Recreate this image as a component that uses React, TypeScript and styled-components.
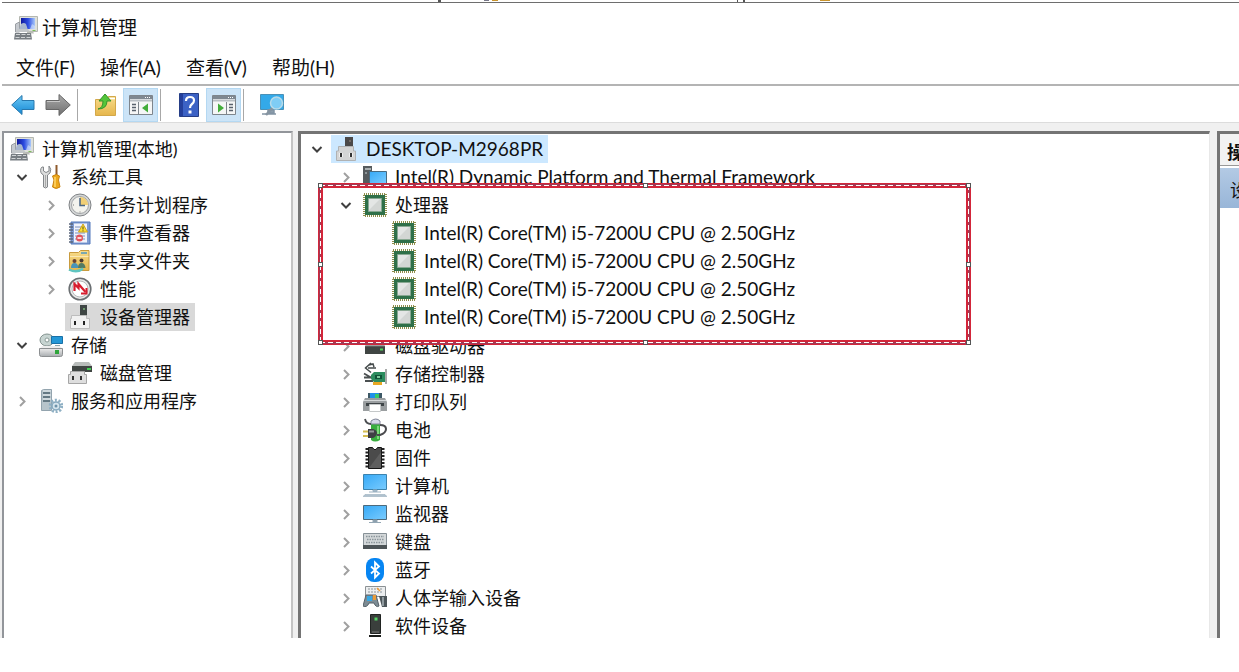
import React from "react";
import styled, { createGlobalStyle, css } from "styled-components";

const GlobalStyle = createGlobalStyle`
  * { box-sizing: border-box; }
  body {
    margin: 0;
    background: #fff;
    color: #111;
    font-family: Lato, "Noto Sans CJK SC", sans-serif;
    font-size: 18px;
    line-height: 28px;
    overflow: hidden;
  }
  button { font: inherit; color: inherit; }
`;

/* ---------- layout ---------- */

const Window = styled.div`
  display: flex;
  flex-direction: column;
  height: calc(100vh - 34px);
  padding-left: 2px;
`;

const Backdrop = styled.div`
  height: 3px;
  border-bottom: 1px solid #6e6e6e;
  padding-left: 436px;
  line-height: 0;
`;

const TitleBar = styled.header`
  display: flex;
  align-items: center;
  gap: 4px;
  height: 49px;
  padding-left: 12px;
`;

const Title = styled.h1`
  margin: 0;
  font-size: 19px;
  font-weight: 400;
`;

const MenuBar = styled.nav`
  display: flex;
  align-items: center;
  gap: 25px;
  height: 34px;
  padding-left: 14px;
  border-bottom: 2px solid #b4b4b4;
  font-size: 19px;
`;

const MenuItem = styled.button`
  border: 0;
  padding: 0;
  background: none;
  white-space: nowrap;
`;

const Toolbar = styled.div`
  display: flex;
  align-items: center;
  height: 36px;
  padding: 2px 0 0 3px;
`;

const ToolButton = styled.button<{ $active?: boolean }>`
  display: flex;
  align-items: center;
  justify-content: center;
  width: 35px;
  height: 34px;
  padding: 0;
  border: 0;
  background: none;
  ${(p) =>
    p.$active &&
    css`
      background: #cce4f7;
      border: 1px solid #b4d8f2;
    `}
`;

const Separator = styled.span`
  width: 1px;
  height: 32px;
  margin: 0 10px 0 2px;
  background: #a8a8a8;
`;

const Workspace = styled.main`
  display: flex;
  flex: 1;
  min-height: 0;
  margin-left: -2px;
  padding: 9px 0 0 2px;
  background: linear-gradient(#dcdcdc, #dcdcdc) 0 0 / 100% 1px no-repeat, #f0f0f0;
`;

const Pane = styled.section`
  min-width: 0;
  overflow: hidden;
  background: #fff;
`;

const ScopePane = styled(Pane)`
  flex: 0 0 291px;
  padding: 2px 0 0 3px;
  border: solid #92959a;
  border-width: 2px 2px 0 2px;
  border-right-color: #c4c4c4;
`;

const DevicePane = styled(Pane)`
  flex: 1;
  margin-left: 5px;
  padding: 1px 0 0 1px;
  border: solid #747474;
  border-width: 3px 1px 0 3px;
  border-right-color: #e8e8e8;
`;

const ActionPane = styled(Pane)`
  flex: 0 0 22px;
  margin-left: 7px;
  border: solid #747474;
  border-width: 3px 0 0 3px;
`;

const ActionHeading = styled.h2`
  margin: 0;
  height: 32px;
  padding: 4px 0 0 7px;
  border-bottom: 1px solid #999;
  background: #f2f2f2;
  font-size: 18px;
  line-height: 28px;
  font-weight: 700;
  white-space: nowrap;
`;

const ActionGroup = styled.div`
  height: 40px;
  margin-top: 2px;
  padding-left: 10px;
  background: linear-gradient(#b3cae4, #98b6d8);
  line-height: 44px;
  white-space: nowrap;
`;

/* ---------- tree ---------- */

const TreeList = styled.ul`
  margin: 0;
  padding: 0;
  list-style: none;
`;

const Row = styled.li<{ $level: number }>`
  display: flex;
  height: 28px;
  padding-left: ${(p) => p.$level * 29}px;
`;

const Toggle = styled.button`
  display: flex;
  align-items: center;
  justify-content: center;
  flex: 0 0 29px;
  padding: 0;
  border: 0;
  background: none;
`;

const NodeButton = styled.button<{ $fill?: string; $latin?: boolean }>`
  display: flex;
  align-items: center;
  gap: 8px;
  height: 28px;
  padding: 0 5px 0 3px;
  border: 0;
  background: ${(p) => p.$fill ?? "none"};
  font-size: ${(p) => (p.$latin ? 19 : 18)}px;
  white-space: nowrap;
`;

const Marked = styled.div`
  position: relative;
  z-index: 1;
  padding-bottom: 1px;
`;

const Selection = styled.div`
  position: absolute;
  z-index: -1;
  top: -8px;
  bottom: -13px;
  left: 16px;
  width: 653px;
  background: #fff;
  border: 5px solid #d3263a;

  &::before {
    content: "";
    position: absolute;
    inset: -4px;
    border: 2px solid #a23a55;
  }
  &::after {
    content: "";
    position: absolute;
    inset: -3px;
    background:
      repeating-linear-gradient(90deg, #fff 0 5px, transparent 5px 8px) 0 0 / 100% 1px no-repeat,
      repeating-linear-gradient(90deg, #fff 0 5px, transparent 5px 8px) 0 100% / 100% 1px no-repeat,
      repeating-linear-gradient(#fff 0 5px, transparent 5px 8px) 0 0 / 1px 100% no-repeat,
      repeating-linear-gradient(#fff 0 5px, transparent 5px 8px) 100% 0 / 1px 100% no-repeat;
  }
`;

const Handle = styled.i<{ $x: number; $y: number }>`
  position: absolute;
  z-index: 1;
  left: ${(p) => p.$x}%;
  top: ${(p) => p.$y}%;
  width: 5px;
  height: 5px;
  margin: ${(p) => (p.$y === 0 ? -5 : p.$y === 100 ? 0 : -2)}px 0 0
    ${(p) => (p.$x === 0 ? -5 : p.$x === 100 ? 0 : -2)}px;
  border: 1px solid #555;
  background: #fff;
`;

/* ---------- icons ---------- */

const Svg = styled.svg`
  display: block;
  flex: none;
`;

const Icon = ({ children, w = 24, h = 24 }: { children: React.ReactNode; w?: number; h?: number }) => (
  <Svg width={w} height={h} viewBox={`0 0 ${w} ${h}`} aria-hidden="true">
    {children}
  </Svg>
);

const Gradients = () => (
  <Svg width="0" height="0" aria-hidden="true">
    <defs>
      <linearGradient id="sky" x1="0" y1="0" x2="1" y2="1">
        <stop offset="0" stopColor="#36a9f6" />
        <stop offset="1" stopColor="#7accff" />
      </linearGradient>
      <linearGradient id="steel" x1="0" y1="0" x2="0" y2="1">
        <stop offset="0" stopColor="#ececec" />
        <stop offset="1" stopColor="#a9adb0" />
      </linearGradient>
      <linearGradient id="navy" x1="0" y1="0" x2="1" y2="0">
        <stop offset="0" stopColor="#10189c" />
        <stop offset="0.5" stopColor="#2b4be0" />
        <stop offset="1" stopColor="#a9c8fa" />
      </linearGradient>
      <linearGradient id="arrowBlue" x1="0" y1="0" x2="0" y2="1">
        <stop offset="0" stopColor="#6cc8f5" />
        <stop offset="1" stopColor="#1488d4" />
      </linearGradient>
      <linearGradient id="arrowGray" x1="0" y1="0" x2="0" y2="1">
        <stop offset="0" stopColor="#aaa" />
        <stop offset="1" stopColor="#6f6f6f" />
      </linearGradient>
      <linearGradient id="folder" x1="0" y1="0" x2="0" y2="1">
        <stop offset="0" stopColor="#f7dc8b" />
        <stop offset="1" stopColor="#e6b64c" />
      </linearGradient>
    </defs>
  </Svg>
);

const ManagementIcon = () => (
  <Icon>
    <path d="M5.500.5h18v15h-18z" fill="#dfe1dc" stroke="#b4b7b0" />
    <path d="M7 2h14v11H7z" fill="url(#navy)" />
    <path d="M16 13l2-5 3 2v3z" fill="#dbe7fb" opacity=".6" />
    <path d="M1.500 8l4-2v10h-4z" fill="#c6cacf" stroke="#9a9ea3" />
    <path d="M7 8q3-2 5 0l2 6H5z" fill="#a7b6cf" />
    <path d="M3 13h11l2 3H2z" fill="#c3c7ca" />
    <path d="M13 15.500h6l1 2h-7z" fill="#b9bbb5" />
    <path d="M1 17h16l1 6.500H0z" fill="#777d82" />
    <path d="M2 18.500h14M1.500 21.500h15" stroke="#d0d3d5" strokeDasharray="4 1.500" />
    <path d="M18.500 14.500h3" stroke="#7bbd5a" />
  </Icon>
);

const ToolsIcon = () => (
  <Icon>
    <path d="M3 2a5 5 0 0 0 0 7l1.500 1V22q2 2 4 0V10L11 8q2-4-1-7v5L7 7.500 4.500 6V2z" fill="#dcdddd" stroke="#84878a" />
    <path d="M6.500 10v12" stroke="#aaa" />
    <path d="M16.500 0h2v10h-2z" fill="#8f5a2c" />
    <path d="M13.500 11q4-3 7 0l-1 4 1.500 7q-4 3-7.500 0l1.500-7z" fill="#eda81c" stroke="#c98312" />
    <path d="M16 12v10" stroke="#ffd76b" strokeWidth="1.500" />
  </Icon>
);

const ClockIcon = () => (
  <Icon>
    <circle cx="12" cy="12" r="11" fill="#d4d6d6" stroke="#808386" />
    <circle cx="12" cy="12" r="8.500" fill="#f3f3ee" stroke="#a2a5a8" />
    <path d="M12 12V4a8 8 0 0 1 8 8z" fill="#f1cf75" />
    <path d="M12 5v7.500h5" fill="none" stroke="#4a6684" strokeWidth="1.500" />
    <path d="M12 18.500v1M5 12h1" stroke="#777" />
  </Icon>
);

const EventIcon = () => (
  <Icon>
    <path d="M3 1h19v22H3z" fill="#7f9cd3" stroke="#5378bb" />
    <path d="M6 2.500h13v19H6z" fill="#f0f3fb" />
    <path d="M7 6h10M7 9h10M7 12h10M7 15h10M7 18h10" stroke="#7890c2" />
    <path d="M1 3h4M1 6h4M1 9h4M1 12h4M1 15h4M1 18h4M1 21h4" stroke="#5a657b" strokeWidth="1.300" />
    <path d="M15 3l4.500 8h-9z" fill="#f9df36" stroke="#d0a51d" />
    <path d="M15 5.500v3M15 9.300v1" stroke="#554a16" />
    <circle cx="11.500" cy="17" r="3.500" fill="#e2545c" />
    <path d="M9.500 17h4" stroke="#fff" strokeWidth="1.500" />
  </Icon>
);

const ShareIcon = () => (
  <Icon>
    <path d="M1.500 3.500h9l2-2h8.500v20H1.500z" fill="url(#folder)" stroke="#c99b3e" />
    <path d="M13 4h6" stroke="#5299c0" strokeWidth="1.500" />
    <path d="M2 7.500h18.500" stroke="#fbe9b4" />
    <circle cx="6.500" cy="12" r="2" fill="#6b4334" />
    <circle cx="13.500" cy="11.500" r="2" fill="#4c3a30" />
    <path d="M3 19q0-5 3.500-5t4 5z" fill="#4a94b8" />
    <path d="M10 19q0-5 3.500-5t4 5z" fill="#557b62" />
    <path d="M1 20.500q8 4 14-1" fill="none" stroke="#5fc5c0" strokeWidth="2.500" />
  </Icon>
);

const PerformanceIcon = () => (
  <Icon>
    <circle cx="12" cy="12" r="10.800" fill="#e8e9e8" stroke="#6b6f72" strokeWidth="1.600" />
    <circle cx="12" cy="12" r="8" fill="#fff" stroke="#b6babc" />
    <path d="M6.500 14V7l4 4V7l7 8" fill="none" stroke="#d81d2e" strokeWidth="2.200" />
    <path d="M13 16.500h5.500V11" fill="none" stroke="#d81d2e" strokeWidth="2" />
  </Icon>
);

const DeviceManagerIcon = () => (
  <Icon>
    <path d="M12 0h7v11h-7z" fill="#3f4644" />
    <path d="M15 3h2v2h-2z" fill="#6f9b6e" />
    <path d="M3.500 10.500h15v3h3v10h-19v-10h1z" fill="#f1f1f1" stroke="#bdbdbd" />
    <path d="M6 16h2v4H6zM15 16h2v4h-2z" fill="#222" />
  </Icon>
);

const ComputerNodeIcon = () => (
  <Icon>
    <path d="M11 0h8v10h-8z" fill="#4b4949" />
    <path d="M15 3h2v2h-2z" fill="#746c66" />
    <path d="M4.500 9.500h15V14h2v9.500h-19V14h2z" fill="#d4d5d5" stroke="#b0b2b3" />
    <path d="M5 16h4v4H5zM15 16h4v4h-4z" fill="#efefef" />
    <path d="M6 16h2v4H6zM16 16h2v4h-2z" fill="#333" />
  </Icon>
);

const StorageIcon = () => (
  <Icon>
    <ellipse cx="8" cy="7" rx="7" ry="6" fill="#c7d4d1" stroke="#82918e" />
    <circle cx="8" cy="7" r="2" fill="#fff" stroke="#8a9c98" />
    <path d="M12.500 3.500h11v7h-11z" fill="#2497d6" stroke="#1970a7" />
    <path d="M16 12h5v2h-5z" fill="#8ba6ad" />
    <path d="M3 13h18l2.500 3H.5z" fill="#ededed" />
    <path d="M.5 15.500h23v6q0 2-2 2h-19q-2 0-2-2z" fill="url(#steel)" stroke="#8c8f91" />
    <path d="M16 17h4v4h-4z" fill="#30a53b" />
  </Icon>
);

const DiskManagementIcon = () => (
  <Icon>
    <path d="M7 1h14l3 4H4z" fill="#b9bdbb" />
    <path d="M4 5h20v6H4z" fill="#404643" />
    <path d="M19 7h4v2h-4z" fill="#41cd52" />
    <path d="M2.500 10.500h14v3h2v9h-18v-9h2z" fill="#dedede" stroke="#a6a6a6" />
    <path d="M4 15h2v4H4zM12 15h2v4h-2z" fill="#333" />
  </Icon>
);

const ServicesIcon = () => (
  <Icon>
    <path d="M2.500 1.500l2-1h8v21h-10z" fill="#b6c4cb" stroke="#93a4ae" />
    <path d="M4 4h7M4 8h7M4 12h7" stroke="#49606d" strokeWidth="1.500" />
    <path d="M4 2h8M4 6h8M4 10h8" stroke="#e6edf0" />
    <circle cx="17" cy="17" r="5.800" fill="none" stroke="#8fb0c4" strokeWidth="3" strokeDasharray="2 1.640" />
    <circle cx="17" cy="17" r="4" fill="#d6e5ed" stroke="#86a9be" strokeWidth="1.500" />
    <circle cx="17" cy="17" r="1.500" fill="#6d93aa" />
  </Icon>
);

const PlatformIcon = () => (
  <Icon>
    <path d="M0 1h9v17H0z" fill="#565b5e" />
    <path d="M2 4h6" stroke="#c6cbce" strokeWidth="1.500" />
    <path d="M2 8h2" stroke="#8d9599" strokeWidth="2" />
    <path d="M6.500 6.500h17v12h-17z" fill="url(#sky)" stroke="#496b80" />
    <path d="M12 20h8M9 22h13" stroke="#7d8b94" />
  </Icon>
);

const CpuIcon = () => (
  <Icon>
    <rect x="1" y="1" width="22" height="22" fill="none" stroke="#8f8f4c" strokeWidth="2" strokeDasharray="1 1" />
    <path d="M2 2h20v20H2z" fill="#2f7049" />
    <path d="M5.500 5.500h13v13h-13z" fill="#d3d6d4" stroke="#88a892" />
    <path d="M6 6h11L6 17z" fill="#e4e6e5" />
  </Icon>
);

const DiskIcon = () => (
  <Icon>
    <path d="M5 8h14l3 5H2z" fill="#c8caca" />
    <path d="M2 12h20v8H2z" fill="#404543" />
    <path d="M2 12h20" stroke="#777" />
    <path d="M17 15.500h3" stroke="#50d45d" strokeWidth="2" />
  </Icon>
);

const StorageControllerIcon = () => (
  <Icon>
    <path d="M8 1L2.500 6 8 10.500M6 3l4-1 1 3M5 6h8" fill="none" stroke="#454b4c" strokeWidth="1.500" />
    <path d="M1 11.500l7 4M1 15.500h7M2 19h8" stroke="#4b5051" strokeWidth="1.800" />
    <path d="M8 13l3-3h12v10H11l-3-3z" fill="#2b8c5e" />
    <path d="M12 13h7v4h-7z" fill="#105338" />
    <path d="M14 14h3v2h-3z" fill="#7cc99c" />
    <path d="M23 7v15" stroke="#a8aaa9" strokeWidth="2" />
    <path d="M10 20h9v3h-9z" fill="#e8a724" />
  </Icon>
);

const PrinterIcon = () => (
  <Icon>
    <path d="M5 3h14v7H5z" fill="#3c5866" />
    <path d="M7 3h9v5H7z" fill="#1f8fea" />
    <path d="M12 4h4v4h-4z" fill="#37c968" />
    <path d="M2 8h20l2 4v9H0v-9z" fill="#9a9ea0" />
    <path d="M1 10.500h22" stroke="#d5d8d9" />
    <path d="M3 13h18v3H3z" fill="#3e4447" />
    <path d="M6.500 14.500h11v7h-11z" fill="#fff" stroke="#c5c8c9" />
  </Icon>
);

const BatteryIcon = () => (
  <Icon>
    <path d="M8 3q5-4 9 0v19q-5 3-9 0z" fill="#39ad3f" />
    <path d="M8 3q5-4 9 0v3H8z" fill="#d6d8ea" stroke="#85869d" />
    <path d="M15 8v13" stroke="#7ed97c" strokeWidth="2" />
    <path d="M2 1q1 5 6 5" fill="none" stroke="#4b4e51" strokeWidth="1.800" />
    <path d="M17 7q6 0 6 4t-6 6h-3" fill="none" stroke="#4a4b4e" strokeWidth="2" />
    <path d="M5 11h5q4 1 4 4t-4 5H5z" fill="#3f4044" />
    <path d="M6 13.500h5" stroke="#96989a" strokeWidth="2" />
    <path d="M0 13.500h5M0 18h5" stroke="#d3bc52" strokeWidth="2" />
  </Icon>
);

const FirmwareIcon = () => (
  <Icon>
    <path d="M4 2v21M20 2v21" stroke="#222" strokeWidth="3" strokeDasharray="2 1.500" />
    <path d="M5.500 1.500h4l1.500 2h2l1.500-2h4v21h-13z" fill="#4b4b4b" stroke="#161616" />
    <path d="M6 22L18 6v16z" fill="#5e5e5e" />
  </Icon>
);

const ComputerIcon = () => (
  <Icon>
    <path d="M.5.5h23v15H.5z" fill="url(#sky)" stroke="#3c83ae" />
    <path d="M10 16h4v1.500h-4zM6 18h12" fill="#abc0ce" stroke="#9cb2c2" />
    <path d="M2 20.500h20l2 2H0z" fill="#afc1ce" stroke="#8fa6b7" strokeWidth=".5" />
  </Icon>
);

const MonitorIcon = () => (
  <Icon>
    <path d="M.5 3.500h23v14H.5z" fill="url(#sky)" stroke="#4d6a7c" />
    <path d="M10 18h4v2h-4zM6 20.500h12" fill="#8699a7" stroke="#94a7b4" />
  </Icon>
);

const KeyboardIcon = () => (
  <Icon>
    <path d="M.5 3.500h23v12H.5z" fill="#d4d8da" stroke="#879197" />
    <path d="M3 6.500h18M4 9.500h17M3 12.500h18" stroke="#8b959a" strokeWidth="1.300" strokeDasharray="1.500 1" />
    <path d="M0 15h24v4H0z" fill="#4d5457" />
  </Icon>
);

const BluetoothIcon = () => (
  <Icon>
    <rect x="3" y="0" width="18" height="24" rx="8" fill="#0785f2" />
    <path d="M8 8.500l8 7-4 4V4.500l4 4-8 7" fill="none" stroke="#fff" strokeWidth="1.800" />
  </Icon>
);

const HidIcon = () => (
  <Icon>
    <path d="M2.500.5h20v10h-20z" fill="#eceeef" stroke="#8b9194" />
    <path d="M5 3h15M5 6h15" stroke="#8c9499" strokeDasharray="2 1" />
    <path d="M14 2l3 3" stroke="#ee9b36" strokeWidth="1.500" />
    <path d="M3 9h10l3 11q-3 2-5-3H6q-2 5-6 3z" fill="#7d8c94" stroke="#566168" />
    <path d="M4 10h5v5H4z" fill="#39a8e3" />
    <path d="M10 9h3v5h-3z" fill="#e89b39" />
    <path d="M16 10h8v11h-5z" fill="#4d565a" />
    <path d="M20 11v9" stroke="#a8b3b8" strokeWidth="1.500" />
  </Icon>
);

const SoftwareIcon = () => (
  <Icon>
    <path d="M7.500.5h10v19h-10z" fill="#3a3f3c" stroke="#202321" />
    <path d="M11.500 3.500h3v3h-3z" fill="#55d465" />
    <path d="M9 18h7" stroke="#777" />
    <path d="M6 21h12v2H6z" fill="#191c1a" />
  </Icon>
);

const BackIcon = () => (
  <Icon>
    <path d="M.7 12L11 2.500v5h12v9H11v5z" fill="url(#arrowBlue)" stroke="#2878ad" />
  </Icon>
);

const ForwardIcon = () => (
  <Icon w={26}>
    <path d="M25.300 12L14 1.500v6H1v9h13v6z" fill="url(#arrowGray)" stroke="#666" />
    <path d="M2 8.500h13" stroke="#c8c8c8" />
  </Icon>
);

const UpFolderIcon = () => (
  <Icon>
    <path d="M1.500 6.500h11l2-3h7v19h-20z" fill="url(#folder)" stroke="#d3a84a" />
    <path d="M15 5.500h6" stroke="#fff" strokeWidth="1.500" />
    <path d="M4 16q5-1 5-8H5l6-7 6 7h-4q0 8-9 8z" fill="#54c53a" stroke="#34932b" />
  </Icon>
);

const PaneIcon = ({ right }: { right?: boolean }) => (
  <Icon>
    <path d="M.5 2.500h23v19H.5z" fill="#f5f6f6" stroke="#7e858c" />
    <path d="M1 3h22v3H1z" fill="#7f8891" />
    <path d="M16 4.500h6" stroke="#fff" strokeDasharray="1 1" />
    <path d="M1 7.500h22" stroke="#b9bfc4" strokeWidth="2" />
    <path d={right ? "M14.500 9v12" : "M9.500 9v12"} stroke="#7e858c" />
    <path
      d={right ? "M17 11.500h4M17 14.500h4M17 17.500h4" : "M3 11.500h4M3 14.500h4M3 17.500h4"}
      stroke="#59626d"
      strokeWidth="1.500"
    />
    <path d={right ? "M6 10.500l6 4.500-6 4.500z" : "M19 10.500L13 15l6 4.500z"} fill="#43ad3a" />
  </Icon>
);

const HelpIcon = () => (
  <Icon w={20}>
    <path d="M.5.5h19v23H.5z" fill="#3c62c5" stroke="#263e86" />
    <path d="M1 1h3v22H1z" fill="#243f9b" />
    <path d="M7 8q0-4 4-4t4 3.500q0 2-2 3.500t-2 4" fill="none" stroke="#fff" strokeWidth="2.200" />
    <path d="M9.500 17.500h3v3h-3z" fill="#fff" />
  </Icon>
);

const ScanIcon = () => (
  <Icon w={26}>
    <path d="M1.500 1.500h23v15h-23z" fill="#33a9e9" stroke="#4a91b7" />
    <path d="M9 17h6v3H9zM3 21h14" fill="#8c9eac" stroke="#8294a4" strokeWidth="1.500" />
    <path d="M14 14l-7 8" stroke="#8694a0" strokeWidth="2.500" />
    <circle cx="17.500" cy="10" r="6" fill="#7fcdf5" stroke="#b7dbea" strokeWidth="1.500" />
  </Icon>
);

const Chevron = ({ open }: { open?: boolean }) => (
  <Icon w={12} h={12}>
    <path
      d={open ? "M1.500 4L6 8.500 10.500 4" : "M4 2l4.500 4.500L4 11"}
      fill="none"
      stroke={open ? "#404040" : "#a0a0a0"}
      strokeWidth="2"
    />
  </Icon>
);

/* ---------- data and tree rows ---------- */

type Node = {
  label: string;
  icon: React.ComponentType;
  level: number;
  open?: boolean;
  leaf?: boolean;
  fill?: string;
  latin?: boolean;
};

const scopeNodes: Node[] = [
  { label: "计算机管理(本地)", icon: ManagementIcon, level: 0, leaf: true },
  { label: "系统工具", icon: ToolsIcon, level: 0, open: true },
  { label: "任务计划程序", icon: ClockIcon, level: 1 },
  { label: "事件查看器", icon: EventIcon, level: 1 },
  { label: "共享文件夹", icon: ShareIcon, level: 1 },
  { label: "性能", icon: PerformanceIcon, level: 1 },
  { label: "设备管理器", icon: DeviceManagerIcon, level: 2, leaf: true, fill: "#d9d9d9" },
  { label: "存储", icon: StorageIcon, level: 0, open: true },
  { label: "磁盘管理", icon: DiskManagementIcon, level: 2, leaf: true },
  { label: "服务和应用程序", icon: ServicesIcon, level: 0 },
];

const devicesBefore: Node[] = [
  { label: "DESKTOP-M2968PR", icon: ComputerNodeIcon, level: 0, open: true, fill: "#cce8ff", latin: true },
  { label: "Intel(R) Dynamic Platform and Thermal Framework", icon: PlatformIcon, level: 1, latin: true },
];

const processors: Node[] = [
  { label: "处理器", icon: CpuIcon, level: 1, open: true },
  ...Array.from({ length: 4 }, () => ({
    label: "Intel(R) Core(TM) i5-7200U CPU @ 2.50GHz",
    icon: CpuIcon,
    level: 3,
    leaf: true,
    latin: true,
  })),
];

const devicesAfter: Node[] = [
  { label: "磁盘驱动器", icon: DiskIcon, level: 1 },
  { label: "存储控制器", icon: StorageControllerIcon, level: 1 },
  { label: "打印队列", icon: PrinterIcon, level: 1 },
  { label: "电池", icon: BatteryIcon, level: 1 },
  { label: "固件", icon: FirmwareIcon, level: 1 },
  { label: "计算机", icon: ComputerIcon, level: 1 },
  { label: "监视器", icon: MonitorIcon, level: 1 },
  { label: "键盘", icon: KeyboardIcon, level: 1 },
  { label: "蓝牙", icon: BluetoothIcon, level: 1 },
  { label: "人体学输入设备", icon: HidIcon, level: 1 },
  { label: "软件设备", icon: SoftwareIcon, level: 1 },
];

const Tree = ({ nodes, label }: { nodes: Node[]; label: string }) => (
  <TreeList aria-label={label}>
    {nodes.map(({ icon: NodeIcon, ...node }, i) => (
      <Row key={i} $level={node.level}>
        {!node.leaf && (
          <Toggle aria-label={node.label} aria-expanded={!!node.open}>
            <Chevron open={node.open} />
          </Toggle>
        )}
        <NodeButton $fill={node.fill} $latin={node.latin}>
          <NodeIcon />
          <span>{node.label}</span>
        </NodeButton>
      </Row>
    ))}
  </TreeList>
);

const handles = [
  [0, 0], [50, 0], [100, 0], [0, 50], [100, 50], [0, 100], [50, 100], [100, 100],
];

export default function App() {
  return (
    <>
      <GlobalStyle />
      <Window>
        <Backdrop>
          <Icon w={436} h={2}>
            <path d="M0 0h3v2H0zM299 0h1v2h-1zM305 0h2v2h-2z" fill="#555" />
            <path d="M46 0h5v1h-5z" fill="#778" />
            <path d="M54 0h6v1h-6zM382 0h10v1h-10z" fill="#c9942c" />
          </Icon>
        </Backdrop>
        <TitleBar>
          <ManagementIcon />
          <Title>计算机管理</Title>
        </TitleBar>
        <MenuBar>
          {["文件(F)", "操作(A)", "查看(V)", "帮助(H)"].map((item) => (
            <MenuItem key={item}>{item}</MenuItem>
          ))}
        </MenuBar>
        <Toolbar role="toolbar">
          <ToolButton aria-label="后退"><BackIcon /></ToolButton>
          <ToolButton aria-label="前进"><ForwardIcon /></ToolButton>
          <Separator />
          <ToolButton aria-label="向上"><UpFolderIcon /></ToolButton>
          <ToolButton $active aria-label="显示控制台树"><PaneIcon /></ToolButton>
          <Separator />
          <ToolButton aria-label="帮助"><HelpIcon /></ToolButton>
          <ToolButton $active aria-label="显示操作窗格"><PaneIcon right /></ToolButton>
          <Separator />
          <ToolButton aria-label="扫描"><ScanIcon /></ToolButton>
        </Toolbar>
        <Workspace>
          <ScopePane>
            <Tree nodes={scopeNodes} label="控制台" />
          </ScopePane>
          <DevicePane>
            <Tree nodes={devicesBefore} label="设备" />
            <Marked>
              <Selection>
                {handles.map(([x, y]) => (
                  <Handle key={`${x}-${y}`} $x={x} $y={y} />
                ))}
              </Selection>
              <Tree nodes={processors} label="处理器" />
            </Marked>
            <Tree nodes={devicesAfter} label="其他设备" />
          </DevicePane>
          <ActionPane>
            <ActionHeading>操作</ActionHeading>
            <ActionGroup>设备管理器</ActionGroup>
          </ActionPane>
        </Workspace>
      </Window>
      <Gradients />
    </>
  );
}
